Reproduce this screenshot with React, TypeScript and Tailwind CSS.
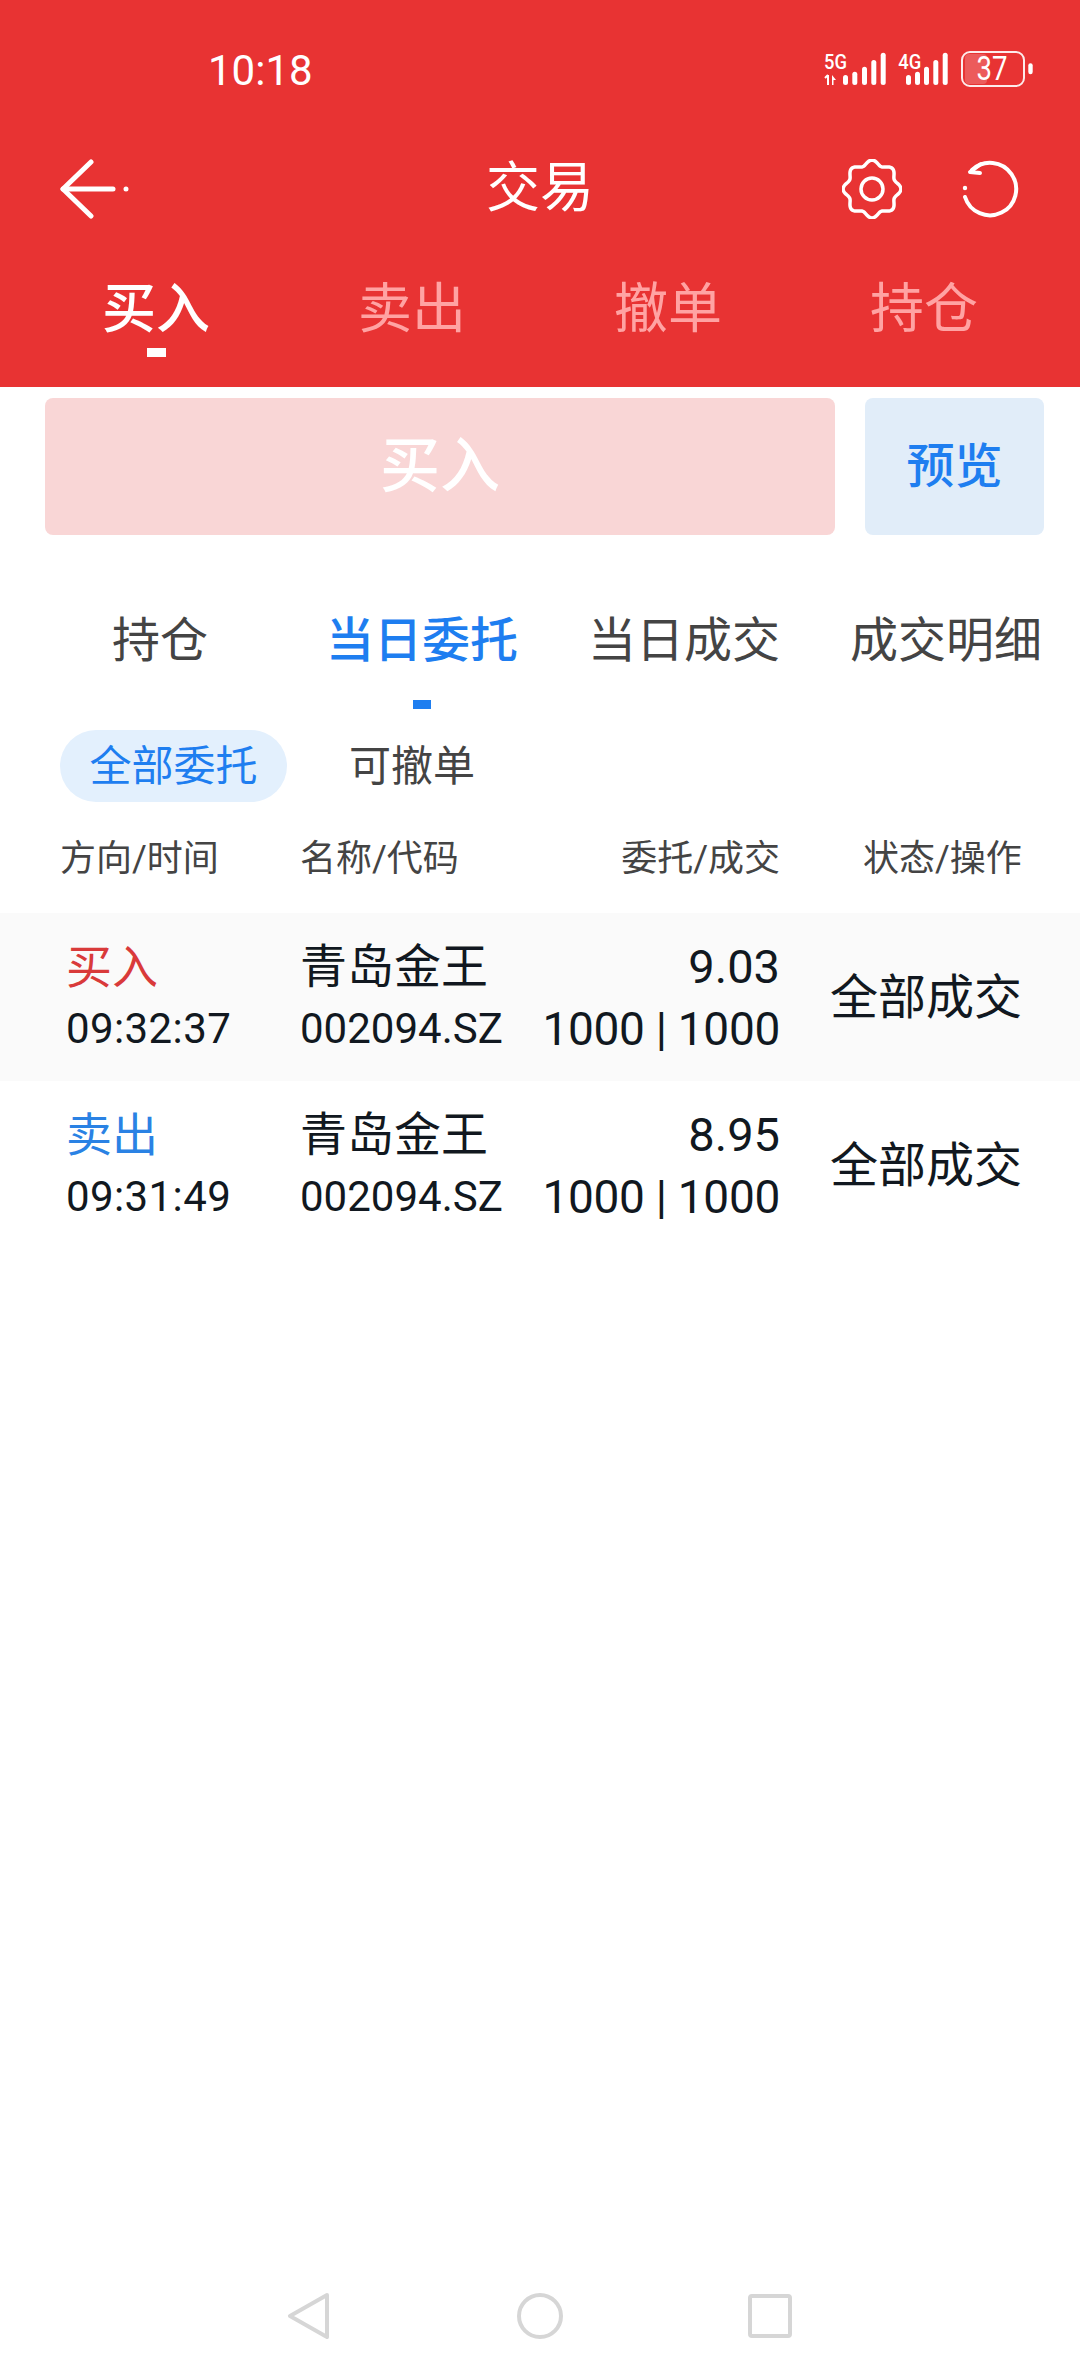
const cjk = "font-['Roboto','Noto_Sans_CJK_SC',sans-serif]";

const topTabs = [
  { label: "买入", active: true },
  { label: "卖出", active: false },
  { label: "撤单", active: false },
  { label: "持仓", active: false },
];

const subTabs = [
  { label: "持仓", active: false },
  { label: "当日委托", active: true },
  { label: "当日成交", active: false },
  { label: "成交明细", active: false },
];

const orders = [
  { side: "买入", sideColor: "text-[#d93a3a]", time: "09:32:37", price: "9.03", bg: "bg-[#fafafa]" },
  { side: "卖出", sideColor: "text-[#2a82e4]", time: "09:31:49", price: "8.95", bg: "bg-white" },
];

// wavy outline of the settings gear
function gearPath() {
  const pts: string[] = [];
  for (let i = 0; i < 160; i++) {
    const t = (i / 160) * Math.PI * 2;
    const r = 26.5 + 2.4 * Math.cos(8 * t);
    const x = 30 + r * Math.sin(t);
    const y = 30 - r * Math.cos(t);
    pts.push(`${i === 0 ? "M" : "L"}${x.toFixed(2)} ${y.toFixed(2)}`);
  }
  return pts.join(" ") + " Z";
}

function StatusIcons() {
  return (
    <svg width="220" height="50" viewBox="0 0 220 50" fill="white" className="mr-[40px]">
      <text x="4" y="23.5" fontFamily="Roboto" fontSize="21" fontWeight="500" textLength="23" lengthAdjust="spacingAndGlyphs">5G</text>
      <path d="M8 30v10M5 33l3-3" stroke="white" strokeWidth="2" fill="none" />
      <path d="M12 30l4 5h-2.5v5H12z" />
      <rect x="23" y="30" width="5" height="10" rx="2.5" />
      <rect x="32.3" y="26.7" width="5" height="13.3" rx="2.5" />
      <rect x="42" y="21.7" width="5" height="18.3" rx="2.5" />
      <rect x="51.3" y="15" width="5" height="25" rx="2.5" />
      <rect x="60.7" y="7.7" width="5" height="32.3" rx="2.5" />
      <text x="78.3" y="23.5" fontFamily="Roboto" fontSize="21" fontWeight="500" textLength="23" lengthAdjust="spacingAndGlyphs">4G</text>
      <rect x="86" y="30" width="5" height="10" rx="2.5" />
      <rect x="95" y="26.7" width="5" height="13.3" rx="2.5" />
      <rect x="104" y="21.7" width="5" height="18.3" rx="2.5" />
      <rect x="113.3" y="15" width="5" height="25" rx="2.5" />
      <rect x="122.7" y="7.7" width="5" height="32.3" rx="2.5" />
      <rect x="145" y="9" width="22" height="30" rx="4" fill="white" fillOpacity="0.2" />
      <rect x="142" y="7" width="62" height="34" rx="8" fill="none" stroke="white" strokeWidth="2" strokeOpacity="0.9" />
      <text x="156.5" y="35" fontFamily="Roboto" fontSize="33" textLength="31" lengthAdjust="spacingAndGlyphs">37</text>
      <rect x="208.3" y="18.3" width="4.4" height="11" rx="2.2" />
    </svg>
  );
}

function BackIcon() {
  return (
    <svg width="80" height="60" viewBox="0 0 80 60" fill="none" stroke="white" strokeWidth="5" strokeLinecap="round" strokeLinejoin="round">
      <path d="M31 3 3 30l28 27" />
      <path d="M3 30h50" />
      <circle cx="66" cy="30" r="1.5" fill="white" strokeWidth="2" />
    </svg>
  );
}

function GearIcon() {
  return (
    <svg width="60" height="60" viewBox="0 0 60 60" fill="none" stroke="white" strokeWidth="3.5">
      <path d={gearPath()} />
      <circle cx="30" cy="30" r="11" />
    </svg>
  );
}

function RefreshIcon() {
  return (
    <svg width="60" height="60" viewBox="0 0 60 60" fill="none" stroke="white" strokeWidth="4" strokeLinecap="round" strokeLinejoin="round">
      <path d="M12 11A26.2 26.2 0 1 1 5 38" />
      <path d="M21 5 10 13l10 1" />
      <circle cx="5" cy="29" r="1.2" fill="white" strokeWidth="2" />
    </svg>
  );
}

export default function App() {
  return (
    <div className={`flex h-[2376px] w-[1080px] flex-col overflow-hidden bg-white ${cjk}`}>
      {/* 顶部红色区域 */}
      <header className="h-[387px] bg-[#e83333] text-white">
        <div className="flex h-[140px] items-center justify-between pl-[208px]">
          <span className="pt-[2px] text-[42px] leading-none">10:18</span>
          <StatusIcons />
        </div>
        <div className="flex h-[98px] items-center pl-[60px] pr-[60px]">
          <div className="flex-1">
            <BackIcon />
          </div>
          <span className="text-[54px] leading-none">交易</span>
          <div className="flex flex-1 items-center justify-end gap-[58px]">
            <GearIcon />
            <RefreshIcon />
          </div>
        </div>
        <div className="grid grid-cols-4 px-[28px] pt-[46px]">
          {topTabs.map((tab) => (
            <div key={tab.label} className="flex flex-col items-center">
              <span className={`text-[54px] leading-[52px] ${tab.active ? "font-medium text-white" : "text-[#ffa3a3]"}`}>
                {tab.label}
              </span>
              {tab.active && <span className="mt-[12px] h-[9px] w-[19px] bg-white" />}
            </div>
          ))}
        </div>
      </header>

      {/* 买入 / 预览 */}
      <div className="mt-[11px] flex h-[137px] gap-[30px] pl-[45px] pr-[36px]">
        <button className="w-[790px] rounded-[8px] bg-[#f9d6d6] text-[60px] font-medium text-white">买入</button>
        <button className="w-[179px] rounded-[8px] bg-[#e1edf9] text-[48px] font-medium text-[#1e7ef0]">预览</button>
      </div>

      {/* 委托列表标签 */}
      <div className="mt-[82px] grid grid-cols-4 pl-[29px] pr-[3px]">
        {subTabs.map((tab) => (
          <div key={tab.label} className="relative flex justify-center">
            <span className={`text-[48px] leading-[48px] ${tab.active ? "font-medium text-[#1e7ef0]" : "text-[#444444]"}`}>
              {tab.label}
            </span>
            {tab.active && <span className="absolute left-1/2 top-[83px] h-[9px] w-[18px] -translate-x-1/2 bg-[#1e7ef0]" />}
          </div>
        ))}
      </div>

      <div className="mt-[65px] flex items-center pl-[60px]">
        <span className="flex h-[72px] w-[227px] items-center justify-center rounded-full bg-[#e3f0fd] text-[42px] text-[#1e7ef0]">
          全部委托
        </span>
        <span className="ml-[62px] text-[42px] text-[#444444]">可撤单</span>
      </div>

      {/* 表头 */}
      <div className="mt-[37px] flex h-[40px] items-center text-[36px] leading-[40px] text-[#444444]">
        <span className="ml-[60px] w-[240px]">方向/时间</span>
        <span className="w-[320px]">名称/代码</span>
        <span className="w-[160px] text-right">委托/成交</span>
        <span className="ml-[83px]">状态/操作</span>
      </div>

      {/* 委托记录 */}
      <div className="mt-[34px]">
        {orders.map((order) => (
          <div key={order.time} className={`flex h-[168px] items-center text-[#111820] ${order.bg}`}>
            <div className="ml-[66px] flex w-[234px] flex-col pt-[1px]">
              <span className={`text-[46px] leading-[62px] ${order.sideColor}`}>{order.side}</span>
              <span className="text-[42px] leading-[62px] tracking-[0.4px]">{order.time}</span>
            </div>
            <div className="flex w-[240px] flex-col pt-[2px]">
              <span className="text-[47px] leading-[62px]">青岛金王</span>
              <span className="text-[42px] leading-[62px]">002094.SZ</span>
            </div>
            <div className="flex w-[240px] flex-col items-end whitespace-nowrap pt-[1px]">
              <span className="text-[47px] leading-[62px]">{order.price}</span>
              <span className="text-[46px] leading-[62px] tracking-[-0.3px]">1000 | 1000</span>
            </div>
            <span className="ml-[50px] pt-[2px] text-[48px] leading-none">全部成交</span>
          </div>
        ))}
      </div>

      {/* 系统导航 */}
      <nav className="mt-auto mb-[37px] flex justify-center gap-[184px] pr-[1px]">
        <svg width="46" height="46" viewBox="0 0 46 46" fill="none" stroke="#d6d6d6" strokeWidth="4" strokeLinejoin="round">
          <path d="M40 2 3 23l37 21z" />
        </svg>
        <svg width="46" height="46" viewBox="0 0 46 46" fill="none" stroke="#d6d6d6" strokeWidth="4">
          <circle cx="23" cy="23" r="21" />
        </svg>
        <svg width="46" height="46" viewBox="0 0 46 46" fill="none" stroke="#d6d6d6" strokeWidth="4" strokeLinejoin="round">
          <rect x="3" y="3" width="40" height="40" rx="2" />
        </svg>
      </nav>
    </div>
  );
}
